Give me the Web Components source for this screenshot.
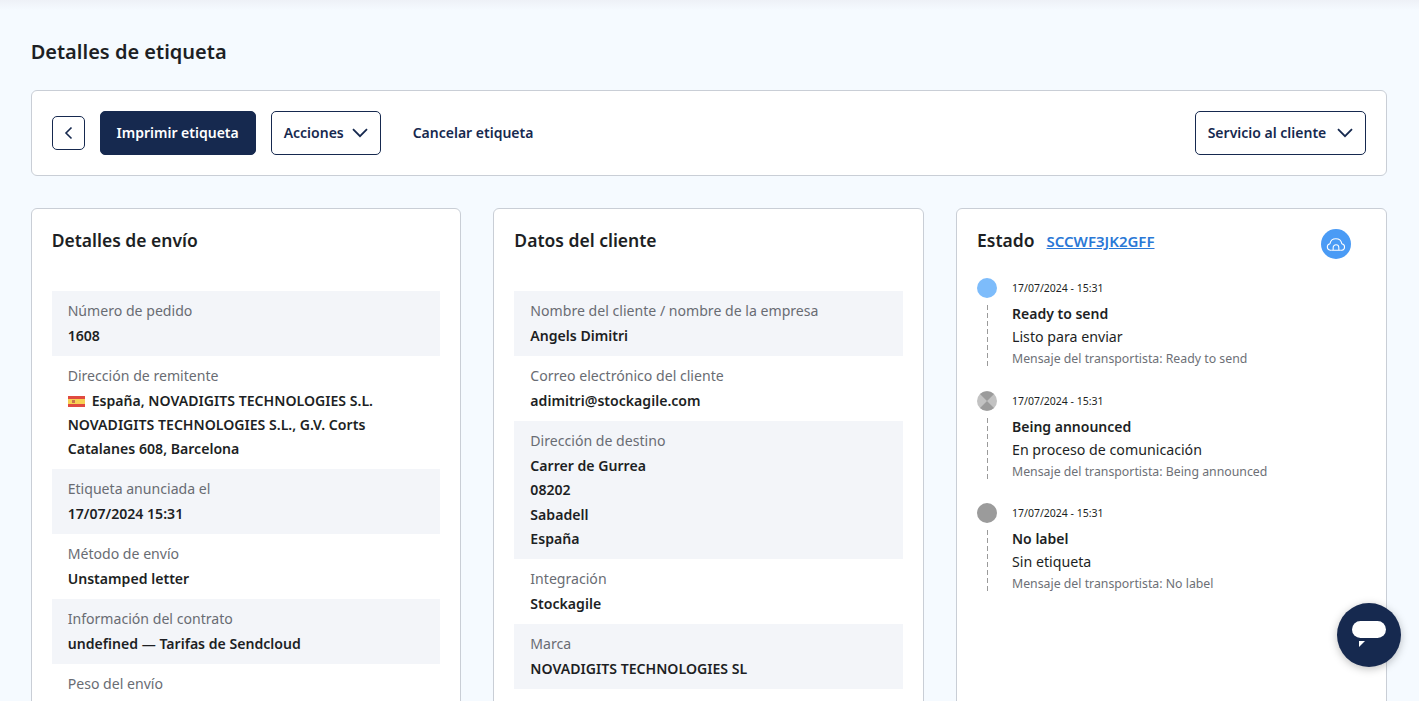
<!DOCTYPE html>
<html lang="es">
<head>
<meta charset="utf-8">
<title>Detalles de etiqueta</title>
<style>
  html, body { margin: 0; height: 701px; overflow: hidden; background: #f5faff; }
  body { font-family: "Noto Sans", "Open Sans", sans-serif; color: #1d1f24; }
</style>
</head>
<body>
<label-page>
  <page-toolbar></page-toolbar>
  <detail-card heading="Detalles de envío">
    <detail-row label="Número de pedido">1608</detail-row>
    <detail-row label="Dirección de remitente" style="line-height: 24.27px"><flag-es></flag-es>España, NOVADIGITS TECHNOLOGIES S.L.<br>NOVADIGITS TECHNOLOGIES S.L., G.V. Corts<br>Catalanes 608, Barcelona</detail-row>
    <detail-row label="Etiqueta anunciada el">17/07/2024 15:31</detail-row>
    <detail-row label="Método de envío">Unstamped letter</detail-row>
    <detail-row label="Información del contrato">undefined — Tarifas de Sendcloud</detail-row>
    <detail-row label="Peso del envío"></detail-row>
  </detail-card>
  <detail-card heading="Datos del cliente">
    <detail-row label="Nombre del cliente / nombre de la empresa">Angels Dimitri</detail-row>
    <detail-row label="Correo electrónico del cliente">adimitri@stockagile.com</detail-row>
    <detail-row label="Dirección de destino">Carrer de Gurrea<br>08202<br>Sabadell<br>España</detail-row>
    <detail-row label="Integración">Stockagile</detail-row>
    <detail-row label="Marca">NOVADIGITS TECHNOLOGIES SL</detail-row>
  </detail-card>
  <status-card>
    <status-step kind="blue" date="17/07/2024 - 15:31" title="Ready to send" sub="Listo para enviar" msg="Mensaje del transportista: Ready to send"></status-step>
    <status-step kind="mixed" date="17/07/2024 - 15:31" title="Being announced" sub="En proceso de comunicación" msg="Mensaje del transportista: Being announced"></status-step>
    <status-step kind="grey" date="17/07/2024 - 15:31" title="No label" sub="Sin etiqueta" msg="Mensaje del transportista: No label"></status-step>
  </status-card>
</label-page>
<chat-bubble></chat-bubble>

<script>
// fuente comun de los componentes
const FONT = '"Noto Sans", "Open Sans", sans-serif';
const CHEVRON = '<svg width="16" height="10" viewBox="0 0 16 10" fill="none" stroke="#16294f" stroke-width="1.8"><path d="M1 1.2l7 7 7-7"/></svg>';

class LabelPage extends HTMLElement {
  constructor() {
    super();
    this.attachShadow({ mode: "open" });
    this.shadowRoot.innerHTML = `
      <style>
        :host { display: block; height: 701px; box-sizing: border-box; padding: 39px 32.33px 0 30.67px; position: relative; overflow: hidden; }
        :host::before { content: ""; position: absolute; left: 0; right: 0; top: 0; height: 10px; background: linear-gradient(#eef1f7, #f5faff); }
        h1 { margin: 0 0 25px; font: 600 20px/26px ${FONT}; color: #1d1f24; }
        .cols { display: grid; grid-template-columns: repeat(3, 1fr); column-gap: 32px; margin-top: 32px; }
      </style>
      <h1>Detalles de etiqueta</h1>
      <slot name="bar"></slot>
      <div class="cols"><slot></slot></div>`;
  }
  connectedCallback() {
    const bar = this.querySelector("page-toolbar");
    if (bar) bar.slot = "bar";
  }
}

class PageToolbar extends HTMLElement {
  constructor() {
    super();
    this.attachShadow({ mode: "open" });
    this.shadowRoot.innerHTML = `
      <style>
        :host { display: flex; align-items: center; height: 86px; box-sizing: border-box; padding: 0 20px; background: #fff; border: 1px solid #c9ced6; border-radius: 6px; font: 600 14px/20px ${FONT}; color: #16294f; }
        .btn { display: flex; align-items: center; justify-content: center; box-sizing: border-box; height: 44px; border: 1px solid #16294f; border-radius: 5px; white-space: nowrap; }
        .back { width: 33px; height: 34px; margin-right: 15px; }
        .primary { width: 156px; background: #16294f; color: #fff; margin-right: 15px; }
        .menu { justify-content: space-between; padding: 0 12px; }
        .acc { width: 110px; }
        .link { margin-left: 32px; }
        .serv { width: 171px; margin-left: auto; }
      </style>
      <div class="btn back"><svg width="9" height="14" viewBox="0 0 9 14" fill="none" stroke="#16294f" stroke-width="1.6"><path d="M7.5 1.5L2 7l5.5 5.5"/></svg></div>
      <div class="btn primary">Imprimir etiqueta</div>
      <div class="btn menu acc">Acciones ${CHEVRON}</div>
      <div class="link">Cancelar etiqueta</div>
      <div class="btn menu serv">Servicio al cliente ${CHEVRON}</div>`;
  }
}

class DetailCard extends HTMLElement {
  constructor() {
    super();
    this.attachShadow({ mode: "open" });
  }
  connectedCallback() {
    this.shadowRoot.innerHTML = `
      <style>
        :host { display: block; height: 560px; box-sizing: border-box; padding: 19px 20px 0; background: #fff; border: 1px solid #c9ced6; border-radius: 6px; }
        h2 { margin: 0 0 39px; font: 600 17.5px/24px ${FONT}; color: #1d1f24; }
      </style>
      <h2>${this.getAttribute("heading") || ""}</h2>
      <slot></slot>`;
  }
}

class DetailRow extends HTMLElement {
  constructor() {
    super();
    this.attachShadow({ mode: "open" });
  }
  connectedCallback() {
    this.shadowRoot.innerHTML = `
      <style>
        :host { display: block; padding: 8px 16px; min-height: 48.9px; font: 14.1px/24.45px ${FONT}; }
        :host(:nth-of-type(odd)) { background: #f3f5f9; }
        .label { color: #696c73; }
        .value { font-weight: 600; color: #1d1f24; position: relative; top: 0.4px; }
      </style>
      <div class="label">${this.getAttribute("label") || ""}</div>
      <div class="value"><slot></slot></div>`;
  }
}

class FlagEs extends HTMLElement {
  constructor() {
    super();
    this.attachShadow({ mode: "open" });
    this.shadowRoot.innerHTML = `
      <style>:host { display: inline-block; margin-right: 7px; vertical-align: -1px; line-height: 0; }</style>
      <svg width="17" height="11" viewBox="0 0 17 11"><rect width="17" height="11" fill="#e04a40"/><rect y="3" width="17" height="5" fill="#f7d154"/><rect x="4" y="4" width="3" height="3" fill="#c9754a"/></svg>`;
  }
}

class StatusCard extends HTMLElement {
  constructor() {
    super();
    this.attachShadow({ mode: "open" });
    this.shadowRoot.innerHTML = `
      <style>
        :host { display: block; height: 560px; box-sizing: border-box; padding: 19px 20px 0; background: #fff; border: 1px solid #c9ced6; border-radius: 6px; }
        .head { display: flex; align-items: center; height: 24px; gap: 12px; position: relative; margin-bottom: 26px; }
        h2 { margin: 0; font: 600 17.5px/24px ${FONT}; color: #1d1f24; }
        a { font: 600 15px/20px ${FONT}; color: #2a78d6; text-decoration: underline; position: relative; top: 1px; }
        .cloud { position: absolute; right: 15px; top: 1px; width: 30px; height: 30px; border-radius: 50%; background: #4a9bf5; display: flex; align-items: center; justify-content: center; }
      </style>
      <div class="head">
        <h2>Estado</h2><a>SCCWF3JK2GFF</a>
        <span class="cloud"><svg width="20" height="15" viewBox="0 0 19 14" fill="none" stroke="#fff" stroke-width="1"><path d="M5 12.5H4A3.2 3.2 0 0 1 3.8 6.2 5.7 5.7 0 0 1 15 6.2 3.2 3.2 0 0 1 15 12.5H14"/><path d="M6.8 12.5V10a2.7 2.7 0 0 1 5.4 0v2.5M5 12.5h9"/></svg></span>
      </div>
      <slot></slot>`;
  }
}

class StatusStep extends HTMLElement {
  constructor() {
    super();
    this.attachShadow({ mode: "open" });
  }
  connectedCallback() {
    const kind = this.getAttribute("kind");
    const dots = {
      blue: '<circle cx="10" cy="10" r="10" fill="#7dbcfb"/>',
      grey: '<circle cx="10" cy="10" r="10" fill="#9b9b9b"/>',
      mixed: '<circle cx="10" cy="10" r="10" fill="#c2c2c2"/><path d="M10 10L3 3A10 10 0 0 1 17 3Z M10 10L3 17A10 10 0 0 0 17 17Z" fill="#9b9b9b"/>'
    };
    this.shadowRoot.innerHTML = `
      <style>
        :host { display: grid; grid-template-columns: 20px 1fr; column-gap: 15px; height: 112.5px; }
        .rail { display: flex; flex-direction: column; align-items: center; }
        .rail svg { flex: none; }
        .line { width: 1px; height: 62px; margin-top: 7px; background: repeating-linear-gradient(#9a9a9a 0 5px, transparent 5px 8px); }
        .date { font: 10.5px/20px ${FONT}; color: #1d1f24; }
        .title { font: 600 14px/26px ${FONT}; color: #1d1f24; margin-top: 3px; }
        .sub { font: 14.2px/20px ${FONT}; color: #1d1f24; }
        .msg { font: 12.3px/22px ${FONT}; color: #6d7076; margin-top: 1px; }
      </style>
      <div class="rail"><svg width="20" height="20" viewBox="0 0 20 20">${dots[kind]}</svg><div class="line"></div></div>
      <div>
        <div class="date">${this.getAttribute("date")}</div>
        <div class="title">${this.getAttribute("title")}</div>
        <div class="sub">${this.getAttribute("sub")}</div>
        <div class="msg">${this.getAttribute("msg")}</div>
      </div>`;
  }
}

class ChatBubble extends HTMLElement {
  constructor() {
    super();
    this.attachShadow({ mode: "open" });
    this.shadowRoot.innerHTML = `
      <style>
        :host { position: fixed; left: 1337px; top: 603px; width: 64px; height: 64px; border-radius: 50%; background: #16294f; box-shadow: 0 2px 8px rgba(0,0,0,.25); display: flex; align-items: center; justify-content: center; }
      </style>
      <svg width="34" height="28" viewBox="0 0 34 28"><rect width="34" height="17" rx="8.5" fill="#fff"/><path d="M7 20h6l-6 6z" fill="#fff"/></svg>`;
  }
}

customElements.define("label-page", LabelPage);
customElements.define("page-toolbar", PageToolbar);
customElements.define("detail-card", DetailCard);
customElements.define("detail-row", DetailRow);
customElements.define("flag-es", FlagEs);
customElements.define("status-card", StatusCard);
customElements.define("status-step", StatusStep);
customElements.define("chat-bubble", ChatBubble);
</script>
</body>
</html>
